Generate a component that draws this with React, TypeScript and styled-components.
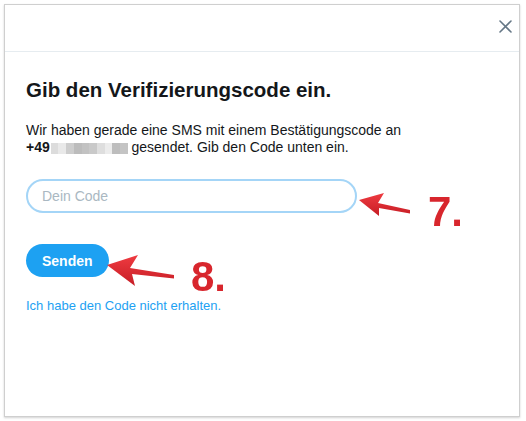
import styled, { createGlobalStyle } from "styled-components";

const GlobalStyle = createGlobalStyle`
  * {
    box-sizing: border-box;
  }

  body {
    margin: 0;
    background: #ffffff;
    font-family: "Liberation Sans", Arial, sans-serif;
    color: #14171a;
  }
`;

const blurShades = [
  "#dcdcdc",
  "#e9e9e9",
  "#cdcdcd",
  "#bcbcbc",
  "#c2c2c2",
  "#c9c9c9",
  "#dedede",
  "#ececec",
  "#bdbdbd",
  "#c4c4c4",
];

export default function App() {
  return (
    <>
      <GlobalStyle />
      <Page>
        <Dialog>
          <DialogHeader>
            <CloseButton aria-label="Schließen">
              <svg width="13" height="13" viewBox="0 0 13 13">
                <path
                  d="M1 1 L12 12 M12 1 L1 12"
                  stroke="#657786"
                  strokeWidth="1.6"
                  strokeLinecap="round"
                />
              </svg>
            </CloseButton>
          </DialogHeader>

          <DialogBody>
            <Title>Gib den Verifizierungscode ein.</Title>
            <Text>
              Wir haben gerade eine SMS mit einem Bestätigungscode an
              <br />
              <strong>+49</strong>
              <Blurred>
                {blurShades.map((shade, i) => (
                  <BlurCell key={i} $shade={shade} />
                ))}
              </Blurred>{" "}
              gesendet. Gib den Code unten ein.
            </Text>

            <CodeInput type="text" placeholder="Dein Code" autoFocus />

            <SendButton>Senden</SendButton>

            <HelpLink href="#">Ich habe den Code nicht erhalten.</HelpLink>
          </DialogBody>
        </Dialog>

        <Arrows width="526" height="421" viewBox="0 0 526 421">
          <defs>
            <linearGradient id="arrowRed" x1="0" y1="0" x2="0" y2="1">
              <stop offset="0" stopColor="#ef3b41" />
              <stop offset="1" stopColor="#c61d25" />
            </linearGradient>
          </defs>
          <path
            d="M359 200 L384 193 L378 203 L410 210 L410 213.5 L379 208 L379 216 Z"
            fill="url(#arrowRed)"
          />
          <path
            d="M107 265 L138 255 L130 268 L174 275 L174 278.5 L132 274 L135 286 Z"
            fill="url(#arrowRed)"
          />
        </Arrows>

        <StepNumber $top={191} $left={428}>
          7.
        </StepNumber>
        <StepNumber $top={256} $left={191}>
          8.
        </StepNumber>
      </Page>
    </>
  );
}

const Page = styled.div`
  position: relative;
  width: 526px;
  height: 421px;
  padding: 4px 0 0 4px;
`;

const Dialog = styled.div`
  width: 516px;
  height: 413px;
  background: #ffffff;
  border: 1px solid #cfcfcf;
  box-shadow: 0 1px 2px rgba(0, 0, 0, 0.18);
  display: flex;
  flex-direction: column;
`;

const DialogHeader = styled.div`
  height: 47px;
  display: flex;
  justify-content: flex-end;
  align-items: flex-start;
  padding: 15px 7px 0 0;
  border-bottom: 1px solid #e6ecf0;
`;

const CloseButton = styled.button`
  border: none;
  background: none;
  padding: 0;
  width: 13px;
  height: 13px;
  cursor: pointer;
  display: flex;
`;

const DialogBody = styled.div`
  display: flex;
  flex-direction: column;
  align-items: flex-start;
  padding: 0 21px;
`;

const Title = styled.h2`
  margin: 26px 0 0;
  font-size: 20.5px;
  line-height: 24px;
  font-weight: 700;
  color: #14171a;
`;

const Text = styled.p`
  margin: 20px 0 0;
  font-size: 14px;
  line-height: 17px;
  color: #14171a;

  strong {
    font-weight: 700;
  }
`;

const Blurred = styled.span`
  display: inline-flex;
  vertical-align: -2px;
  height: 11px;
  margin-left: 1px;
`;

const BlurCell = styled.span<{ $shade: string }>`
  width: 7.7px;
  height: 11px;
  background: ${(p) => p.$shade};
`;

const CodeInput = styled.input`
  margin-top: 23px;
  width: 331px;
  height: 34px;
  padding: 0 14px;
  border: 2px solid #a4d5f7;
  border-radius: 17px;
  outline: none;
  font-family: "Liberation Sans", Arial, sans-serif;
  font-size: 14px;
  color: #14171a;
  caret-color: #14171a;

  &::placeholder {
    color: #aab8c2;
  }
`;

const SendButton = styled.button`
  margin-top: 31px;
  height: 33px;
  padding: 0 16px;
  border: none;
  border-radius: 17px;
  background: #1da1f2;
  color: #ffffff;
  font-family: "Liberation Sans", Arial, sans-serif;
  font-size: 14px;
  font-weight: 700;
  cursor: pointer;
`;

const HelpLink = styled.a`
  margin-top: 21px;
  font-size: 13px;
  line-height: 16px;
  color: #1da1f2;
  text-decoration: none;
`;

const Arrows = styled.svg`
  position: absolute;
  top: 0;
  left: 0;
  pointer-events: none;
`;

const StepNumber = styled.span<{ $top: number; $left: number }>`
  position: absolute;
  top: ${(p) => p.$top}px;
  left: ${(p) => p.$left}px;
  font-family: "Liberation Sans", Arial, sans-serif;
  font-size: 42px;
  line-height: 42px;
  font-weight: 700;
  color: #d8262d;
`;
